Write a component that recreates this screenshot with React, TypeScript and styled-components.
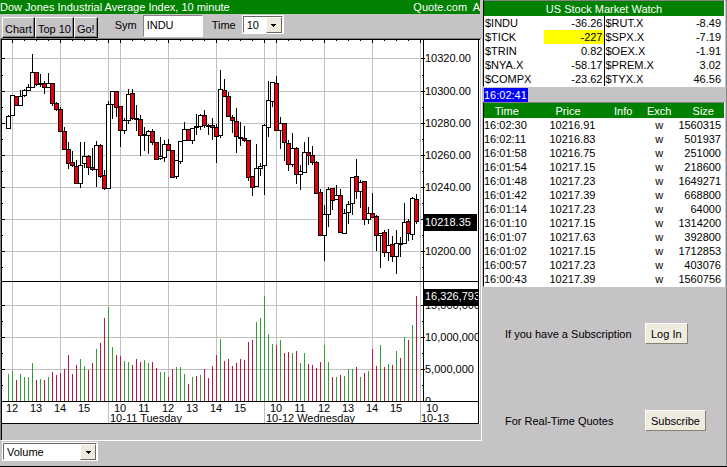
import React from 'react';
import styled, { createGlobalStyle } from 'styled-components';

const GlobalStyle = createGlobalStyle`
  * { box-sizing: border-box; }
  body {
    margin: 0;
    background: #c6c3c6;
    color: #000;
    font: 11px/14px "Liberation Sans", Arial, sans-serif;
  }
  button, input, select { font: inherit; color: inherit; border-radius: 0; }
`;

const Page = styled.div`
  display: grid;
  grid-template-columns: minmax(0, 482fr) minmax(0, 245fr);
  min-height: 100vh;
  border-bottom: 1px solid #000;
  box-shadow: inset -1px 0 #848284;
`;

const Column = styled.div`
  display: flex;
  flex-direction: column;
  min-width: 0;
`;

const TitleBar = styled.header`
  display: flex;
  justify-content: space-between;
  margin-right: 2px;
  background: #008200;
  color: #fff;
  white-space: pre;
`;

const Toolbar = styled.div`
  display: flex;
  align-items: flex-start;
  height: 24px;
  padding: 1px 0 0 2px;
`;

const ButtonGroup = styled.div`
  display: flex;
  margin: 2px 8px 0 0;
`;

const ToolButton = styled.button`
  height: 21px;
  padding: 2px 2px 0;
  background: #c6c3c6;
  border: 1px solid;
  border-color: #fff #000 #000 #fff;
  box-shadow: inset -1px -1px #848284;
  white-space: nowrap;
`;

const FieldLabel = styled.label`
  padding: 3px 6px 0 9px;
`;

const SymbolInput = styled.input`
  width: 60px;
  height: 22px;
  padding: 0 3px 3px;
  background: #fff;
  border: 1px solid;
  border-color: #848284 #fff #fff #848284;
  outline: 0;
`;

const SelectFrame = styled.span<{ $width: number }>`
  position: relative;
  display: block;
  width: ${(p) => p.$width}px;
  height: 19px;
  background: #fff;
  border: 1px solid #fff;

  select {
    appearance: none;
    display: block;
    width: 100%;
    height: 17px;
    padding: 0 18px 0 3px;
    background: #fff;
    border: 1px solid;
    border-color: #6b6963 #fff #fff #6b6963;
    outline: 0;
  }
`;

const Arrow = styled.span`
  position: absolute;
  top: 1px;
  right: 1px;
  bottom: 0;
  display: grid;
  place-items: center;
  width: 16px;
  background: #efebde;
  border: 1px solid;
  border-color: #fff #6b6963 #6b6963 #fff;
  pointer-events: none;
`;

const ChartPanel = styled.main`
  border: 1px solid;
  border-color: #848284 #fff #fff #848284;

  svg {
    display: block;
    width: 100%;
  }
`;

const ChartText = styled.text<{ $light?: boolean }>`
  font-size: 11px;
  fill: ${(p) => (p.$light ? '#fff' : '#000')};
`;

const Footer = styled.footer`
  padding: 1px 2px 5px;
`;

const Sunken = styled.section`
  margin: 0 2px 0 1px;
  border: 1px solid;
  border-color: #848284 #fff #fff #000;
`;

const DataTable = styled.table`
  width: 100%;
  table-layout: fixed;
  border-collapse: collapse;
  background: #fff;

  th, td { padding: 0; white-space: nowrap; }
`;

const HeadCell = styled.th<{ $padRight?: number }>`
  height: 15px;
  background: #008200;
  color: #fff;
  font-weight: normal;
  text-align: ${(p) => (p.$padRight ? 'right' : 'center')};

  && { padding-right: ${(p) => p.$padRight ?? 0}px; }
`;

const NameCell = styled.td`
  && { padding-left: 1px; }
`;

const NumberCell = styled.td<{ $pad: number; $highlight?: boolean; $divider?: boolean }>`
  text-align: right;
  background: ${(p) => (p.$highlight ? '#ff0' : '#fff')};

  && {
    padding-right: ${(p) => p.$pad}px;
    border-right: ${(p) => (p.$divider ? '1px solid #000' : '0')};
  }
`;

const CenterCell = styled.td`
  text-align: center;
`;

const Clock = styled.time`
  align-self: flex-start;
  margin: 1px 0 0 2px;
  padding: 0 1px 0 0;
  background: #00f;
  color: #fff;
`;

const Offers = styled.section`
  display: grid;
  grid-template-columns: 140px max-content;
  align-items: center;
  justify-items: start;
  row-gap: 66px;
  padding: 36px 0 34px 23px;

  p { margin: 0; white-space: nowrap; }
`;

const RaisedButton = styled.button`
  height: 21px;
  padding: 0 5px;
  background: #efebde;
  border: 1px solid;
  border-color: #fff #848273 #848273 #fff;
`;

/* Plot units: three to a pixel, measured downwards from y = 40.
   Each candle is [direction, high, body top, body bottom, low]. */
type Candle = ['u' | 'd', number, number, number, number];

const candles: Candle[] = [
  ['u', 225, 229, 266, 266], ['u', 166, 166, 227, 227], ['d', 169, 169, 197, 197],
  ['u', 150, 169, 197, 197], ['u', 148, 151, 167, 170], ['u', 133, 142, 151, 151],
  ['u', 42, 97, 142, 142], ['d', 97, 97, 133, 137], ['u', 102, 130, 133, 140],
  ['d', 125, 130, 143, 161], ['u', 99, 130, 143, 143], ['d', 130, 130, 190, 195],
  ['d', 186, 190, 209, 212], ['d', 202, 208, 274, 274], ['d', 262, 274, 328, 328],
  ['d', 306, 328, 371, 386], ['d', 333, 367, 376, 379], ['d', 360, 379, 430, 430],
  ['u', 306, 376, 430, 443], ['u', 306, 349, 371, 381], ['d', 345, 349, 383, 404],
  ['d', 324, 383, 388, 390], ['u', 303, 316, 388, 440], ['d', 312, 316, 409, 411],
  ['d', 390, 406, 445, 449], ['u', 183, 193, 445, 445], ['u', 154, 154, 193, 234],
  ['d', 154, 154, 203, 228], ['d', 199, 199, 272, 318], ['u', 234, 241, 272, 281],
  ['u', 148, 163, 241, 250], ['d', 147, 160, 234, 237], ['u', 195, 235, 238, 272],
  ['d', 225, 238, 286, 345], ['u', 263, 283, 287, 332], ['u', 270, 274, 286, 339],
  ['d', 268, 274, 307, 314], ['d', 307, 307, 358, 358], ['u', 291, 349, 355, 357],
  ['u', 300, 313, 352, 363], ['d', 298, 313, 331, 331], ['d', 331, 331, 412, 412],
  ['u', 361, 361, 409, 416], ['u', 304, 304, 364, 371], ['u', 246, 268, 301, 301],
  ['d', 268, 268, 301, 301], ['u', 265, 265, 301, 309], ['u', 222, 259, 262, 282],
  ['u', 223, 226, 259, 268], ['d', 210, 226, 256, 261], ['u', 252, 256, 258, 282],
  ['d', 234, 256, 262, 297], ['d', 252, 262, 290, 366], ['u', 90, 148, 286, 293],
  ['d', 117, 151, 169, 169], ['d', 157, 169, 230, 230], ['d', 225, 232, 241, 276],
  ['d', 204, 244, 290, 336], ['u', 246, 292, 296, 315], ['d', 258, 295, 301, 304],
  ['d', 301, 301, 412, 420], ['d', 409, 409, 442, 467], ['u', 312, 385, 439, 439],
  ['u', 369, 379, 385, 407], ['u', 252, 256, 376, 462], ['u', 123, 181, 262, 288],
  ['u', 127, 127, 184, 198], ['d', 108, 130, 271, 271], ['u', 231, 250, 271, 326],
  ['d', 250, 250, 308, 360], ['d', 300, 310, 373, 392], ['u', 279, 325, 373, 380],
  ['d', 322, 325, 403, 431], ['u', 375, 394, 403, 447], ['u', 306, 337, 398, 398],
  ['d', 291, 337, 346, 374], ['d', 318, 346, 367, 374], ['d', 364, 367, 460, 460],
  ['d', 448, 457, 587, 587], ['u', 495, 523, 587, 662], ['u', 442, 448, 523, 558],
  ['d', 445, 445, 481, 507], ['u', 435, 466, 478, 478], ['d', 448, 466, 577, 577],
  ['u', 508, 520, 580, 580], ['u', 485, 493, 517, 551], ['u', 412, 412, 490, 522],
  ['d', 357, 409, 454, 476], ['u', 422, 427, 454, 503], ['d', 424, 424, 538, 554],
  ['u', 501, 520, 538, 551], ['d', 459, 520, 532, 533], ['d', 526, 529, 586, 632],
  ['u', 580, 580, 586, 683], ['d', 570, 577, 637, 650], ['u', 567, 616, 637, 662],
  ['d', 588, 613, 649, 665], ['u', 570, 610, 649, 699], ['u', 592, 610, 613, 648],
  ['u', 489, 547, 610, 611], ['d', 537, 544, 580, 600], ['u', 473, 475, 583, 597],
  ['d', 462, 478, 544, 549],
];

/* Top of each volume bar, three units to a pixel from y = 270. */
const volumes =
  'g312 g305 r330 g312 g323 g321 g281 r330 g327 r332 g321 r308 r315 r311 r297 r255 r312 r285 g269 g290 r300 r281 g237 r219 r144 g112 g231 r255 r260 g273 g276 r285 r269 r276 g270 g279 r276 r294 g306 g308 r323 r297 g291 g291 g312 r342 g323 r320 g315 r299 r326 r288 r255 g207 r273 r267 r288 r279 r267 r270 r216 r210 g156 g144 g78 g192 g222 r225 g210 r249 r246 g251 r243 g279 g249 r282 r285 r294 r276 g227 g276 r323 g323 r315 g320 g297 g299 r291 g321 r309 g303 r237 r288 g227 r291 g282 r285 g243 r264 g202 r210 g165 r78'
    .split(' ')
    .map((v) => ({ up: v[0] === 'g', top: Number(v.slice(1)) }));

const barX = (i: number) => 8 + 4 * i;
const candleY = (v: number) => 40 + Math.floor(v / 3);
const volumeY = (v: number) => 270 + Math.floor(v / 3);

const verticalLines = [12, 60, 108, 120, 168, 216, 264, 276, 324, 372, 420];
const dayLines = [108, 264, 420];
const priceLines: [number, string][] = [
  [58, '10320.00'], [91, '10300.00'], [123, '10280.00'], [155, '10260.00'],
  [187, '10240.00'], [219, ''], [251, '10200.00'],
];
const volumeLines: [number, string][] = [
  [305, '15,000,000'], [337, '10,000,000'], [369, '5,000,000'], [401, '0'],
];
const minorTicks = [75, 107, 139, 171, 203, 235, 267, 321, 353, 385];
const hours: [number, string][] = [
  [12, '12'], [36, '13'], [60, '14'], [84, '15'], [120, '10'], [144, '11'],
  [168, '12'], [192, '13'], [216, '14'], [240, '15'], [276, '10'], [300, '11'],
  [324, '12'], [348, '13'], [372, '14'], [396, '15'], [432, '10'],
];
const days: [number, string][] = [
  [110, '10-11 Tuesday'], [266, '10-12 Wednesday'], [421, '10-13'],
];

function PriceChart() {
  return (
    <svg viewBox="1 39 480 401" role="img" aria-label="10 minute price and volume chart">
      <defs>
        <clipPath id="volumeAxis">
          <rect x="424" y="282" width="54" height="119" />
        </clipPath>
      </defs>
      <rect x="1" y="39" width="1" height="401" />
      <rect x="1" y="39" width="479" height="385" />
      <rect x="2" y="40" width="476" height="383" fill="#fff" />
      <rect x="479" y="40" width="1" height="384" fill="#fff" />
      <g fill="#c0c0c0">
        {verticalLines.map((x) => (
          <rect key={x} x={x} y="40" width="1" height={dayLines.includes(x) ? 383 : 361} />
        ))}
        {[...priceLines, ...volumeLines].map(([y]) => (
          <rect key={y} x="2" y={y} width="421" height="1" />
        ))}
      </g>
      <g>
        {Array.from({ length: 35 }, (_, i) => 12 + 12 * i).map((x) => (
          <rect key={x} x={x} y="40" width="1" height={verticalLines.includes(x) ? 3 : 1} />
        ))}
        {[...priceLines, ...volumeLines].map(([y]) => (
          <React.Fragment key={y}>
            <rect x="2" y={y} width="3" height="1" />
            <rect x="421" y={y} width="4" height="1" />
          </React.Fragment>
        ))}
        {minorTicks.map((y) => (
          <React.Fragment key={y}>
            <rect x="2" y={y} width="1" height="1" />
            <rect x="422" y={y} width="1" height="1" />
          </React.Fragment>
        ))}
      </g>
      {candles.map(([dir, high, top, bottom, low], i) => {
        const x = barX(i);
        const y1 = candleY(top);
        const y2 = candleY(bottom);
        return (
          <g key={i}>
            <rect x={x} y={candleY(high)} width="1" height={candleY(low) - candleY(high) + 1} />
            <rect x={x - 2} y={y1} width="5" height={y2 - y1 + 1} />
            {y2 - y1 > 1 && (
              <rect
                x={x - 1}
                y={y1 + 1}
                width="3"
                height={y2 - y1 - 1}
                fill={dir === 'u' ? '#fff' : '#e7000c'}
              />
            )}
          </g>
        );
      })}
      {volumes.map(({ up, top }, i) => (
        <rect
          key={i}
          x={barX(i)}
          y={volumeY(top)}
          width="1"
          height={401 - volumeY(top)}
          fill={up ? '#31a231' : '#ce1039'}
        />
      ))}
      <rect x="423" y="40" width="1" height="362" />
      <rect x="2" y="281" width="476" height="1" />
      <rect x="2" y="401" width="476" height="1" />
      {priceLines.map(([y, label]) => (
        <ChartText key={y} x="425" y={y + 4}>{label}</ChartText>
      ))}
      <g clipPath="url(#volumeAxis)">
        {volumeLines.map(([y, label]) => (
          <ChartText key={y} x="425" y={y + 4}>{label}</ChartText>
        ))}
        <rect x="424" y="289" width="54" height="17" />
        <ChartText $light x="425" y="300">16,326,793</ChartText>
      </g>
      <rect x="424" y="214" width="53" height="17" />
      <ChartText $light x="425" y="226">10218.35</ChartText>
      {hours.map(([x, label]) => (
        <ChartText key={x} x={x} y="412" textAnchor="middle">{label}</ChartText>
      ))}
      {days.map(([x, label]) => (
        <ChartText key={x} x={x} y="422">{label}</ChartText>
      ))}
    </svg>
  );
}

function Dropdown({ id, width, options, label }: {
  id: string;
  width: number;
  options: string[];
  label?: string;
}) {
  return (
    <SelectFrame $width={width}>
      <select id={id} aria-label={label} defaultValue={options[0]}>
        {options.map((o) => <option key={o}>{o}</option>)}
      </select>
      <Arrow>
        <svg width="5" height="3" viewBox="0 0 5 3" shapeRendering="crispEdges" aria-hidden="true">
          <path d="M0 0h5v1H0zM1 1h3v1H1zM2 2h1v1H2z" />
        </svg>
      </Arrow>
    </SelectFrame>
  );
}

const watch = [
  ['$INDU', '-36.26', '$RUT.X', '-8.49'],
  ['$TICK', '-227', '$SPX.X', '-7.19'],
  ['$TRIN', '0.82', '$OEX.X', '-1.91'],
  ['$NYA.X', '-58.17', '$PREM.X', '3.02'],
  ['$COMPX', '-23.62', '$TYX.X', '46.56'],
];

const trades = [
  ['16:02:30', '10216.91', '1560315'],
  ['16:02:11', '10216.83', '501937'],
  ['16:01:58', '10216.75', '251000'],
  ['16:01:54', '10217.15', '218600'],
  ['16:01:48', '10217.23', '1649271'],
  ['16:01:42', '10217.39', '668800'],
  ['16:01:14', '10217.23', '64000'],
  ['16:01:10', '10217.15', '1314200'],
  ['16:01:07', '10217.63', '392800'],
  ['16:01:02', '10217.15', '1712853'],
  ['16:00:57', '10217.23', '403076'],
  ['16:00:43', '10217.39', '1560756'],
];

const TradeColumn = styled.col<{ $share: number }>`
  width: ${(p) => p.$share}%;
`;

export default function App() {
  return (
    <>
      <GlobalStyle />
      <Page>
        <Column>
          <TitleBar>
            <span>Dow Jones Industrial Average Index, 10 minute</span>
            <span>Quote.com  A</span>
          </TitleBar>
          <Toolbar>
            <ButtonGroup>
              <ToolButton>Chart</ToolButton>
              <ToolButton>Top 10</ToolButton>
              <ToolButton>Go!</ToolButton>
            </ButtonGroup>
            <FieldLabel htmlFor="symbol">Sym</FieldLabel>
            <SymbolInput id="symbol" defaultValue="INDU" />
            <FieldLabel htmlFor="interval">Time</FieldLabel>
            <Dropdown id="interval" width={42} options={['10', '15', '30']} />
          </Toolbar>
          <ChartPanel>
            <PriceChart />
          </ChartPanel>
          <Footer>
            <Dropdown id="study" width={96} options={['Volume', 'MACD']} label="Study" />
          </Footer>
        </Column>
        <Column>
          <Sunken>
            <DataTable>
              <thead>
                <tr><HeadCell colSpan={4}>US Stock Market Watch</HeadCell></tr>
              </thead>
              <tbody>
                {watch.map(([a, av, b, bv]) => (
                  <tr key={a}>
                    <NameCell>{a}</NameCell>
                    <NumberCell $pad={1} $divider $highlight={a === '$TICK'}>{av}</NumberCell>
                    <NameCell>{b}</NameCell>
                    <NumberCell $pad={3}>{bv}</NumberCell>
                  </tr>
                ))}
              </tbody>
            </DataTable>
          </Sunken>
          <Clock>16:02:41</Clock>
          <Sunken>
            <DataTable>
              <colgroup>
                <TradeColumn $share={19} />
                <TradeColumn $share={32} />
                <TradeColumn $share={14} />
                <TradeColumn $share={16} />
                <TradeColumn $share={19} />
              </colgroup>
              <thead>
                <tr>
                  <HeadCell>Time</HeadCell>
                  <HeadCell>Price</HeadCell>
                  <HeadCell>Info</HeadCell>
                  <HeadCell>Exch</HeadCell>
                  <HeadCell $padRight={10}>Size</HeadCell>
                </tr>
              </thead>
              <tbody>
                {trades.map(([time, price, size]) => (
                  <tr key={time}>
                    <td>{time}</td>
                    <NumberCell $pad={11}>{price}</NumberCell>
                    <td />
                    <CenterCell>w</CenterCell>
                    <NumberCell $pad={3}>{size}</NumberCell>
                  </tr>
                ))}
              </tbody>
            </DataTable>
          </Sunken>
          <Offers>
            <p>If you have a Subscription</p>
            <RaisedButton>Log In</RaisedButton>
            <p>For Real-Time Quotes</p>
            <RaisedButton>Subscribe</RaisedButton>
          </Offers>
        </Column>
      </Page>
    </>
  );
}
